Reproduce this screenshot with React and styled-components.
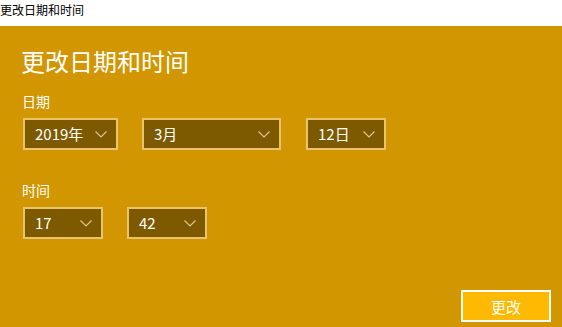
import React from 'react';
import styled, { createGlobalStyle } from 'styled-components';

const GlobalStyle = createGlobalStyle`
  html, body {
    margin: 0;
    padding: 0;
  }
  body {
    font-family: "Noto Sans CJK SC", "Noto Sans", sans-serif;
  }
`;

function Chevron() {
  return (
    <svg width="12" height="7" viewBox="0 0 12 7">
      <polyline
        points="0.5,0.5 6,6 11.5,0.5"
        fill="none"
        stroke="#dcc48e"
        strokeWidth="1.2"
      />
    </svg>
  );
}

function Select({ value, width, offset }) {
  return (
    <SelectBox $width={width} $offset={offset}>
      <SelectValue>{value}</SelectValue>
      <Chevron />
    </SelectBox>
  );
}

function App() {
  return (
    <Page>
      <GlobalStyle />
      <TitleBar>更改日期和时间</TitleBar>
      <Main>
        <Heading>更改日期和时间</Heading>
        <Label>日期</Label>
        <Row>
          <Select value="2019年" width={95} />
          <Select value="3月" width={139} />
          <Select value="12日" width={80} offset={1} />
        </Row>
        <Label $spaced>时间</Label>
        <Row>
          <Select value="17" width={80} />
          <Select value="42" width={80} />
        </Row>
        <Footer>
          <Button>更改</Button>
        </Footer>
      </Main>
    </Page>
  );
}

const Page = styled.div`
  width: 562px;
  height: 327px;
  display: flex;
  flex-direction: column;
  overflow: hidden;
`;

const TitleBar = styled.div`
  height: 26px;
  background-color: #ffffff;
  color: #000000;
  font-size: 12px;
  line-height: 20px;
`;

const Main = styled.div`
  flex: 1;
  background-color: #d19600;
  display: flex;
  flex-direction: column;
  padding: 20px 11px 5px 21px;
`;

const Heading = styled.h1`
  margin: 0;
  font-size: 24px;
  font-weight: 400;
  line-height: 30px;
  color: #ffffff;
`;

const Label = styled.div`
  margin-top: ${(p) => (p.$spaced ? '30px' : '15px')};
  padding-left: 1px;
  font-size: 14px;
  line-height: 20px;
  color: #ffffff;
`;

const Row = styled.div`
  display: flex;
  gap: 24px;
  margin-top: 7px;
  padding-left: 2px;
`;

const SelectBox = styled.div`
  box-sizing: border-box;
  width: ${(p) => p.$width}px;
  height: 32px;
  margin-left: ${(p) => p.$offset || 0}px;
  border: 2px solid #e9c46d;
  background-color: #7d5900;
  display: flex;
  align-items: center;
  justify-content: space-between;
  padding: 0 9px 0 10px;
`;

const SelectValue = styled.span`
  font-size: 15px;
  color: #ffffff;
  line-height: 20px;
`;

const Footer = styled.div`
  margin-top: auto;
  display: flex;
  justify-content: flex-end;
`;

const Button = styled.button`
  box-sizing: border-box;
  width: 90px;
  height: 32px;
  border: 2px solid #ffffff;
  background-color: #ffb900;
  color: #ffffff;
  font-family: "Noto Sans CJK SC", "Noto Sans", sans-serif;
  font-size: 15px;
  padding: 0;
`;

export default App;
